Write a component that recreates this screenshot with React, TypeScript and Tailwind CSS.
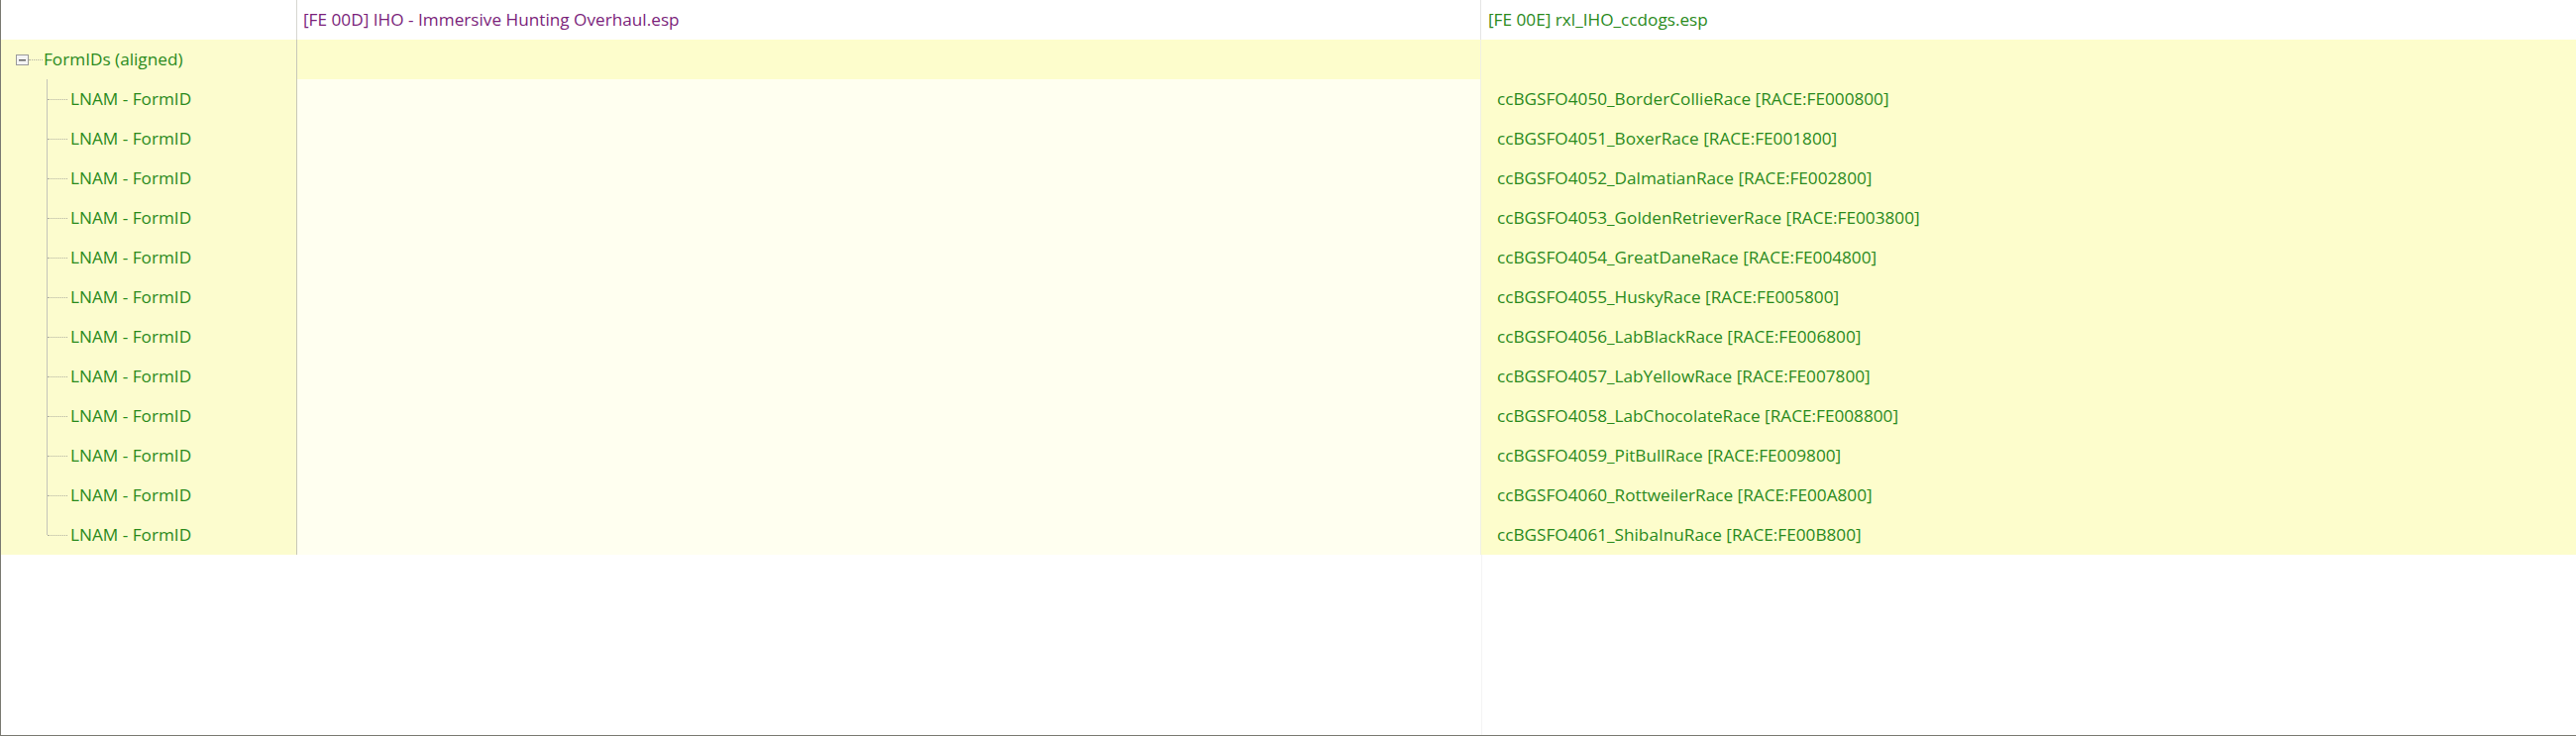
const races = [
  "ccBGSFO4050_BorderCollieRace [RACE:FE000800]",
  "ccBGSFO4051_BoxerRace [RACE:FE001800]",
  "ccBGSFO4052_DalmatianRace [RACE:FE002800]",
  "ccBGSFO4053_GoldenRetrieverRace [RACE:FE003800]",
  "ccBGSFO4054_GreatDaneRace [RACE:FE004800]",
  "ccBGSFO4055_HuskyRace [RACE:FE005800]",
  "ccBGSFO4056_LabBlackRace [RACE:FE006800]",
  "ccBGSFO4057_LabYellowRace [RACE:FE007800]",
  "ccBGSFO4058_LabChocolateRace [RACE:FE008800]",
  "ccBGSFO4059_PitBullRace [RACE:FE009800]",
  "ccBGSFO4060_RottweilerRace [RACE:FE00A800]",
  "ccBGSFO4061_ShibaInuRace [RACE:FE00B800]",
];

const MinusBox = () => (
  <svg width="13" height="11" viewBox="0 0 13 11" className="shrink-0">
    <rect x="0.5" y="0.5" width="12" height="10" fill="#f4f4f4" stroke="#9a9a9a" />
    <rect x="3" y="5" width="7" height="1.5" fill="#606060" />
  </svg>
);

const App = () => {
  return (
    <div
      className="w-[2600px] h-[743px] bg-white border-l border-b border-[#7a7a72] flex flex-col text-[17.2px] overflow-hidden"
      style={{ fontFamily: '"Open Sans", "Noto Sans", sans-serif' }}
    >
      {/* header */}
      <div className="flex h-[40px] shrink-0 bg-white">
        <div className="w-[299px] shrink-0 border-r border-[#d6d6d0]"></div>
        <div className="w-[1195px] shrink-0 border-r border-[#e4e4e4] flex items-center pl-[6px] text-[#7b1f7b]">
          [FE 00D] IHO - Immersive Hunting Overhaul.esp
        </div>
        <div className="flex-1 flex items-center pl-[7px] text-[#2a8a1c]">
          [FE 00E] rxl_IHO_ccdogs.esp
        </div>
      </div>

      {/* body */}
      <div className="flex">
        {/* tree column */}
        <div className="w-[299px] shrink-0 bg-[#fcfcce] border-r border-[#c8c8b8] relative">
          <div className="h-[40px] flex items-center pl-[15px] text-[#2a8a1c]">
            <MinusBox />
            <div className="w-[14px] border-t border-dotted border-[#b0b0a0] mr-[1px]"></div>
            FormIDs (aligned)
          </div>
          {/* vertical tree line */}
          <div className="absolute left-[46px] top-[40px] h-[460px] border-l border-[#c4c4b8]"></div>
          {races.map((r) => (
            <div key={r} className="h-[40px] flex items-center pl-[47px] text-[#2a8a1c]">
              <div className="w-[20px] border-t border-dotted border-[#b0b0a0] mr-[3px]"></div>
              LNAM - FormID
            </div>
          ))}
        </div>

        {/* master column */}
        <div className="w-[1195px] shrink-0 border-r border-[#f0f0e4]">
          <div className="h-[40px] bg-[#fdfdcc]"></div>
          {races.map((r) => (
            <div key={r} className="h-[40px] bg-[#fffff0]"></div>
          ))}
        </div>

        {/* plugin column */}
        <div className="flex-1">
          <div className="h-[40px] bg-[#fdfdcc]"></div>
          {races.map((r) => (
            <div key={r} className="h-[40px] bg-[#fdfdcc] flex items-center pl-[16px] text-[#2a8a1c]">
              {r}
            </div>
          ))}
        </div>
      </div>

      {/* empty area */}
      <div className="flex flex-1">
        <div className="w-[300px] shrink-0"></div>
        <div className="w-[1195px] shrink-0 border-r border-[#f4f4f4]"></div>
        <div className="flex-1"></div>
      </div>
    </div>
  );
};

export default App;
